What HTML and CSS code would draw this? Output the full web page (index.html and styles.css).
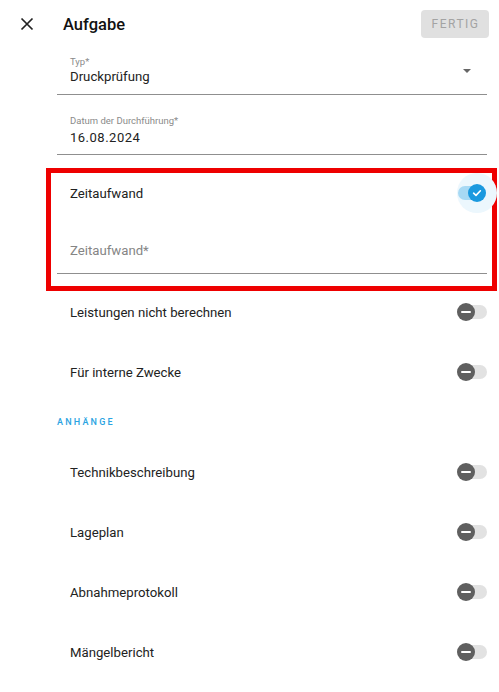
FILE: index.html
```html
<!DOCTYPE html>
<html lang="de">
<head>
<meta charset="utf-8">
<title>Aufgabe</title>
<link rel="stylesheet" href="styles.css">
</head>
<body>
<header class="topbar">
  <button class="icon-btn" aria-label="Schließen">
    <svg width="14" height="14" viewBox="0 0 14 14"><path d="M1.5 1.5 L12.5 12.5 M12.5 1.5 L1.5 12.5" stroke="#222" stroke-width="1.7" fill="none"/></svg>
  </button>
  <h1 class="title">Aufgabe</h1>
  <button class="done-btn" disabled>FERTIG</button>
</header>

<main class="content">
  <div class="field field-select">
    <div class="field-label">Typ*</div>
    <div class="field-value">Druckprüfung</div>
    <span class="caret"></span>
  </div>
  <div class="field field-date">
    <div class="field-label">Datum der Durchführung*</div>
    <div class="field-value">16.08.2024</div>
  </div>

  <section class="highlight">
    <div class="row row-short">
      <span class="row-label">Zeitaufwand</span>
      <span class="switch switch-on">
        <span class="halo"></span>
        <span class="track"></span>
        <span class="thumb">
          <svg width="10" height="10" viewBox="0 0 10 10"><path d="M1.6 5.2 L4 7.4 L8.4 2.8" stroke="#fff" stroke-width="1.6" fill="none" stroke-linecap="round" stroke-linejoin="round"/></svg>
        </span>
      </span>
    </div>
    <div class="input-field">
      <span class="placeholder">Zeitaufwand*</span>
    </div>
  </section>

  <div class="list list-first">
    <div class="row"><span class="row-label">Leistungen nicht berechnen</span><span class="switch switch-off"><span class="track"></span><span class="thumb"><span class="minus"></span></span></span></div>
    <div class="row"><span class="row-label">Für interne Zwecke</span><span class="switch switch-off"><span class="track"></span><span class="thumb"><span class="minus"></span></span></span></div>
  </div>

  <h2 class="subheader">ANHÄNGE</h2>

  <div class="list">
    <div class="row"><span class="row-label">Technikbeschreibung</span><span class="switch switch-off"><span class="track"></span><span class="thumb"><span class="minus"></span></span></span></div>
    <div class="row"><span class="row-label">Lageplan</span><span class="switch switch-off"><span class="track"></span><span class="thumb"><span class="minus"></span></span></span></div>
    <div class="row"><span class="row-label">Abnahmeprotokoll</span><span class="switch switch-off"><span class="track"></span><span class="thumb"><span class="minus"></span></span></span></div>
    <div class="row"><span class="row-label">Mängelbericht</span><span class="switch switch-off"><span class="track"></span><span class="thumb"><span class="minus"></span></span></span></div>
  </div>
</main>
</body>
</html>
```

FILE: styles.css
```css
* { box-sizing: border-box; }
html, body { margin: 0; padding: 0; background: #fff; }
body {
  font-family: Roboto, "Noto Sans", "Liberation Sans", sans-serif;
  color: rgba(0,0,0,0.87);
  width: 499px;
  overflow: hidden;
}

.topbar {
  height: 48px;
  display: flex;
  align-items: center;
  padding: 0 10px 0 20px;
}
.icon-btn {
  width: 14px; height: 14px;
  padding: 0; border: 0; background: none;
  display: flex; align-items: center; justify-content: center;
}
.title {
  margin: 0 0 0 29px;
  font-size: 16.5px;
  font-weight: 500;
  color: #111;
  flex: 1;
}
.done-btn {
  width: 68px; height: 28px;
  border: 0; border-radius: 4px;
  background: #e0e0e0;
  color: #a3a3a3;
  font-family: inherit;
  font-size: 12px;
  font-weight: 400;
  letter-spacing: 1.5px;
  padding: 0 0 0 1px;
}

.content {
  margin-left: 57px;
  width: 430px;
}

.field {
  position: relative;
  border-bottom: 1px solid #8f8f8f;
  padding-bottom: 8px;
}
.field-select { margin-top: 8px; }
.field-date { margin-top: 20px; padding-bottom: 7px; }
.field-label {
  font-size: 9.5px;
  line-height: 12px;
  color: #8a8a8a;
  padding-left: 13px;
}
.field-value {
  font-size: 13.2px;
  line-height: 18px;
  padding-left: 13px;
  color: #222;
}
.field-date .field-value { margin-top: 2px; letter-spacing: 0.5px; font-size: 13px; }
.caret {
  position: absolute;
  right: 16px;
  top: 13px;
  width: 0; height: 0;
  border-left: 4px solid transparent;
  border-right: 4px solid transparent;
  border-top: 4px solid #666;
}

.highlight {
  margin: 13px -10px 0 -11px;
  border: 5px solid #ee0000;
  padding: 0 5px 12px 6px;
}
.row {
  height: 60px;
  display: flex;
  align-items: center;
  justify-content: space-between;
  padding-left: 13px;
}
.row-short { height: 40px; }
.row-label { font-size: 13.2px; color: #222; }

.input-field {
  border-bottom: 1px solid #8f8f8f;
  padding: 28px 0 12px 13px;
}
.placeholder {
  display: block;
  font-size: 13.2px;
  line-height: 20px;
  color: #858585;
}

.switch {
  position: relative;
  width: 30px;
  height: 20px;
  flex: none;
}
.switch .track {
  position: absolute;
  left: 2px; right: 0; top: 3px;
  height: 14px;
  border-radius: 7px;
  background: #e2e2e2;
}
.switch .thumb {
  position: absolute;
  top: 1px;
  width: 18px; height: 18px;
  border-radius: 50%;
  display: flex; align-items: center; justify-content: center;
}
.switch-off .thumb { left: 0; background: #5f5f5f; }
.minus { width: 10px; height: 2px; background: #fff; border-radius: 1px; }

.switch-on { margin-right: 1px; }
.switch-on .track { background: #a7d9f4; right: 4px; }
.switch-on .thumb { left: 12px; background: #1a99df; }
.switch-on .halo {
  position: absolute;
  left: 1px; top: -10px;
  width: 40px; height: 40px;
  border-radius: 50%;
  background: #ecf7fd;
}

.list-first { margin-top: -9px; }

.subheader {
  margin: 0;
  height: 40px;
  display: flex;
  align-items: center;
  font-size: 9px;
  font-weight: 500;
  letter-spacing: 2.2px;
  color: #2aa3e2;
}
```
